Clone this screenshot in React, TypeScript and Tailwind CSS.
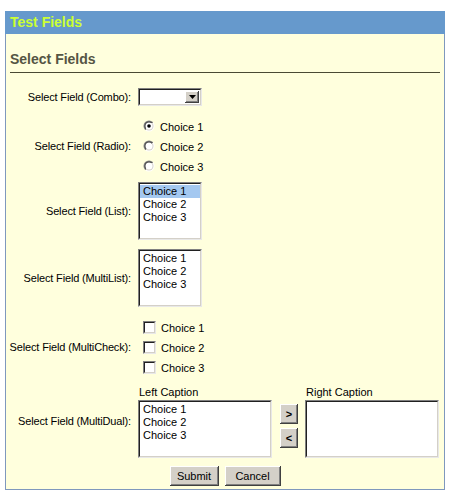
import React from 'react';

const sunken =
  'border border-t-[#808080] border-l-[#808080] border-r-[#e8e8e8] border-b-[#e8e8e8]';
const sunkenInner =
  'border border-t-[#202020] border-l-[#202020] border-r-[#d4d0c8] border-b-[#d4d0c8] bg-white';
const raised =
  'bg-[#d4d0c8] shadow-[inset_-1px_-1px_#404040,inset_1px_1px_#ffffff,inset_-2px_-2px_#808080]';

const choices = ['Choice 1', 'Choice 2', 'Choice 3'];

function Radio({ checked }: { checked?: boolean }) {
  return (
    <svg width="12" height="12" viewBox="0 0 12 12" className="shrink-0">
      <defs>
        <linearGradient id="ro" x1="0" y1="0" x2="1" y2="1">
          <stop offset="0.5" stopColor="#808080" />
          <stop offset="0.5" stopColor="#ffffff" />
        </linearGradient>
        <linearGradient id="ri" x1="0" y1="0" x2="1" y2="1">
          <stop offset="0.5" stopColor="#404040" />
          <stop offset="0.5" stopColor="#d4d0c8" />
        </linearGradient>
      </defs>
      <circle cx="6" cy="6" r="5.5" fill="url(#ro)" />
      <circle cx="6" cy="6" r="4.5" fill="url(#ri)" />
      <circle cx="6" cy="6" r="3.5" fill="#ffffff" />
      {checked && <circle cx="6" cy="6" r="1.8" fill="#000000" />}
    </svg>
  );
}

function Check() {
  return (
    <div className={`w-[13px] h-[13px] shrink-0 ${sunken}`}>
      <div className={`w-full h-full ${sunkenInner}`} />
    </div>
  );
}

function ListBox({ w, items, selected }: { w: string; items: string[]; selected?: number }) {
  return (
    <div className={`${w} h-[58px] ${sunken}`}>
      <div className={`w-full h-full ${sunkenInner} pt-px`}>
        {items.map((c, i) => (
          <div
            key={c}
            className={`h-[13px] leading-[13px] pl-[3px] ${i === selected ? 'bg-[#a4c8f0]' : ''}`}
          >
            {c}
          </div>
        ))}
      </div>
    </div>
  );
}

function Row({ label, children, className = '' }: { label: string; children: React.ReactNode; className?: string }) {
  return (
    <div className={`flex items-center ${className}`}>
      <div className="w-[125px] shrink-0 text-right whitespace-nowrap tracking-[-0.15px]">{label}</div>
      <div className="ml-[7px]">{children}</div>
    </div>
  );
}

export default function App() {
  return (
    <div
      className="min-h-[502px] bg-white pt-[11px] pl-[5px] text-[11px] text-black"
      style={{ fontFamily: '"Liberation Sans", Arial, sans-serif' }}
    >
      <div className="w-[440px] border border-[#7f98bd] bg-[#ffffdd] pb-[3px]">
        <div className="h-[23px] -mt-px -mx-px bg-[#6699cc] pl-[5px] text-[14px] font-bold leading-[23px] text-[#ccff33]">
          Test Fields
        </div>

        <div className="px-[4px] pt-[17px]">
          <h2 className="text-[14px] font-bold leading-[17px] text-[#555544]">Select Fields</h2>
          <div className="mt-[4px] h-px bg-[#4a4a33]" />
        </div>

        <div className="mt-[15px]">
          <Row label="Select Field (Combo):">
            <div className={`w-[64px] h-[18px] ${sunken}`}>
              <div className={`w-full h-full flex justify-end ${sunkenInner} p-px`}>
                <div className={`w-[14px] h-full flex items-center justify-center ${raised}`}>
                  <svg width="7" height="4" viewBox="0 0 7 4">
                    <path d="M0 0h7L3.5 4z" fill="#000" />
                  </svg>
                </div>
              </div>
            </div>
          </Row>

          <Row label="Select Field (Radio):" className="mt-[10px]">
            <div>
              {choices.map((c, i) => (
                <div key={c} className="h-[20px] flex items-center pl-[5px] gap-[5px]">
                  <Radio checked={i === 0} />
                  <span className="mt-[2px]">{c}</span>
                </div>
              ))}
            </div>
          </Row>

          <Row label="Select Field (List):" className="mt-[6px]">
            <ListBox w="w-[64px]" items={choices} selected={0} />
          </Row>

          <Row label="Select Field (MultiList):" className="mt-[9px]">
            <ListBox w="w-[64px]" items={choices} />
          </Row>

          <Row label="Select Field (MultiCheck):" className="mt-[10px]">
            <div>
              {choices.map((c) => (
                <div key={c} className="h-[20px] flex items-center pl-[5px] gap-[5px]">
                  <Check />
                  <span className="mt-[2px]">{c}</span>
                </div>
              ))}
            </div>
          </Row>

          <Row label="Select Field (MultiDual):" className="mt-[8px]">
            <div className="flex">
              <div>
                <div className="h-[15px] leading-[15px] pl-px">Left Caption</div>
                <ListBox w="w-[134px]" items={choices} />
              </div>
              <div className="ml-[8px] mt-[19px] flex flex-col gap-[4px]">
                <div className={`w-[18px] h-[20px] flex items-center justify-center font-bold ${raised}`}>&gt;</div>
                <div className={`w-[18px] h-[20px] flex items-center justify-center font-bold ${raised}`}>&lt;</div>
              </div>
              <div className="ml-[7px]">
                <div className="h-[15px] leading-[15px] pl-px">Right Caption</div>
                <ListBox w="w-[134px]" items={[]} />
              </div>
            </div>
          </Row>

          <div className="mt-[8px] flex justify-center gap-[6px]">
            <button className={`w-[49px] h-[20px] text-[11px] ${raised}`}>Submit</button>
            <button className={`w-[56px] h-[20px] text-[11px] ${raised}`}>Cancel</button>
          </div>
        </div>
      </div>
    </div>
  );
}
